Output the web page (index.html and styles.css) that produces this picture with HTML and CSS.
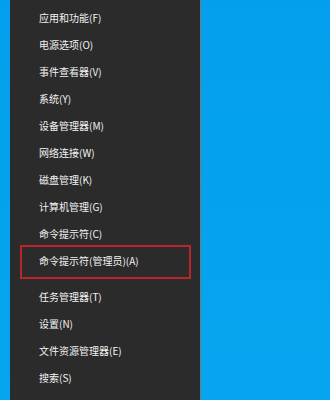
FILE: index.html
```html
<!DOCTYPE html>
<html lang="zh-CN">
<head>
<meta charset="utf-8">
<link rel="stylesheet" href="styles.css">
</head>
<body>
<div class="desktop">
  <nav class="menu">
    <ul class="group">
      <li class="item">应用和功能(F)</li>
      <li class="item">电源选项(O)</li>
      <li class="item">事件查看器(V)</li>
      <li class="item">系统(Y)</li>
      <li class="item">设备管理器(M)</li>
      <li class="item">网络连接(W)</li>
      <li class="item">磁盘管理(K)</li>
      <li class="item">计算机管理(G)</li>
      <li class="item">命令提示符(C)</li>
      <li class="item highlighted">命令提示符(管理员)(A)</li>
    </ul>
    <ul class="group">
      <li class="item">任务管理器(T)</li>
      <li class="item">设置(N)</li>
      <li class="item">文件资源管理器(E)</li>
      <li class="item">搜索(S)</li>
    </ul>
  </nav>
</div>
</body>
</html>
```

FILE: styles.css
```css
html, body {
  margin: 0;
  padding: 0;
  height: 100%;
  overflow: hidden;
}
body {
  background: linear-gradient(180deg, #049fec 0%, #05a6ef 100%);
  font-family: "Noto Sans CJK SC", "Microsoft YaHei", sans-serif;
}
.desktop {
  height: 400px;
  display: flex;
  padding-left: 10px;
}
.menu {
  width: 191px;
  height: 400px;
  background: #2b2b2b;
  border-right: 1px solid #6f7c82;
  overflow: hidden;
  padding-top: 4px;
  box-sizing: border-box;
}
.group {
  list-style: none;
  margin: 0;
  padding: 0;
}
.group + .group {
  margin-top: 9px;
}
.item {
  position: relative;
  height: 27px;
  line-height: 27px;
  padding-left: 29px;
  font-size: 10px;
  color: #f2f2f2;
  white-space: nowrap;
}
.highlighted::after {
  content: "";
  position: absolute;
  left: 10px;
  right: 9px;
  top: -2px;
  bottom: -5px;
  border: 2px solid #b8262a;
  box-sizing: border-box;
}
```
